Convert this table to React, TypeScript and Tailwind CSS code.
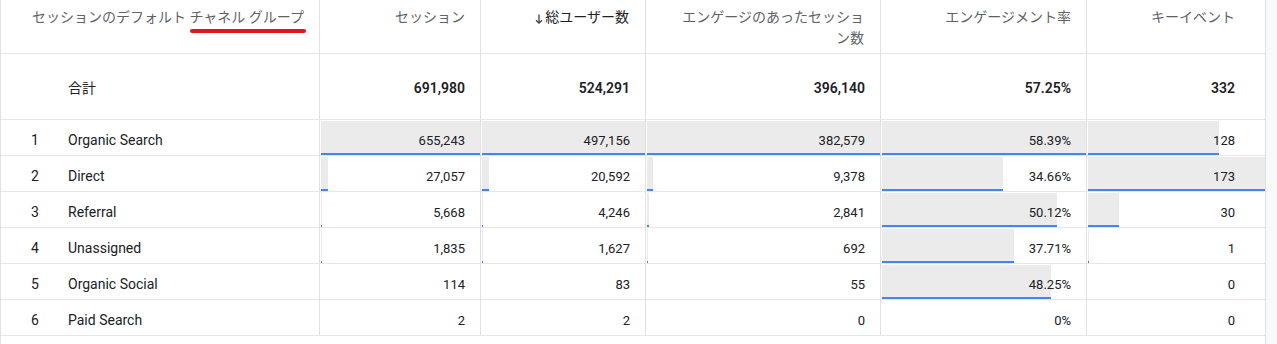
import React from 'react';

type Row = {
  n: number;
  name: string;
  vals: number[];
  labels: string[];
};

const rows: Row[] = [
  { n: 1, name: 'Organic Search', vals: [655243, 497156, 382579, 58.39, 128], labels: ['655,243', '497,156', '382,579', '58.39%', '128'] },
  { n: 2, name: 'Direct', vals: [27057, 20592, 9378, 34.66, 173], labels: ['27,057', '20,592', '9,378', '34.66%', '173'] },
  { n: 3, name: 'Referral', vals: [5668, 4246, 2841, 50.12, 30], labels: ['5,668', '4,246', '2,841', '50.12%', '30'] },
  { n: 4, name: 'Unassigned', vals: [1835, 1627, 692, 37.71, 1], labels: ['1,835', '1,627', '692', '37.71%', '1'] },
  { n: 5, name: 'Organic Social', vals: [114, 83, 55, 48.25, 0], labels: ['114', '83', '55', '48.25%', '0'] },
  { n: 6, name: 'Paid Search', vals: [2, 2, 0, 0, 0], labels: ['2', '2', '0', '0%', '0'] },
];

const totals = ['691,980', '524,291', '396,140', '57.25%', '332'];

const maxes = [0, 1, 2, 3, 4].map((i) => Math.max(...rows.map((r) => r.vals[i])));

const gridCols = 'grid grid-cols-[319px_161px_165px_235px_206px_178px]';

const SortArrow = () => (
  <svg width="10" height="12" viewBox="0 0 10 12" className="mt-[6px] mr-[1px] shrink-0">
    <path d="M5 1.5v8.5M2 7.2L5 10.2 8 7.2" fill="none" stroke="#3c4043" strokeWidth="1.3" />
  </svg>
);

const BarCell = ({ value, max, label, last }: { value: number; max: number; label: string; last?: boolean }) => {
  const pct = max > 0 ? (value / max) * 100 : 0;
  return (
    <div className={`grid pt-[1px] pl-[1px] ${last ? '' : 'border-r border-[#e0e0e0]'}`}>
      <div
        className="[grid-area:1/1] self-stretch justify-self-start bg-[#ebebeb] border-b-2 border-[#4285f4]"
        style={{ width: `${pct}%`, display: pct > 0 ? 'block' : 'none' }}
      />
      <span
        className={`[grid-area:1/1] self-center justify-self-end pt-[6px] text-[13px] text-[#202124] ${last ? 'pr-[30px]' : 'pr-[15px]'}`}
      >
        {label}
      </span>
    </div>
  );
};

export default function App() {
  return (
    <div className="flex h-[344px] w-[1277px] overflow-hidden bg-white font-[Roboto,'Noto_Sans_CJK_JP',sans-serif]">
      <div className="w-[1266px] shrink-0 border-l border-r border-[#e0e0e0]">
        {/* header */}
        <div className={`${gridCols} h-[54px] border-b border-[#e6e6e6] text-[14px] leading-[21px] text-[#5f6368]`}>
          <div className="border-r border-[#e0e0e0] pt-[7px] pr-[15px] text-right">
            セッションのデフォルト{' '}
            <span className="relative inline-block">
              チャネル グループ
              <span className="absolute left-0 right-[-2px] top-[22px] h-[4px] rounded-full bg-[#e3141c]" />
            </span>
          </div>
          <div className="border-r border-[#e0e0e0] pt-[7px] pr-[15px] text-right">セッション</div>
          <div className="flex justify-end border-r border-[#e0e0e0] pt-[7px] pr-[16px] text-[#202124]">
            <SortArrow />
            <span>総ユーザー数</span>
          </div>
          <div className="border-r border-[#e0e0e0] pt-[7px] pr-[16px] text-right">
            エンゲージのあったセッショ
            <br />
            ン数
          </div>
          <div className="border-r border-[#e0e0e0] pt-[7px] pr-[15px] text-right">エンゲージメント率</div>
          <div className="pt-[7px] pr-[30px] text-right">キーイベント</div>
        </div>

        {/* totals */}
        <div className={`${gridCols} h-[66px] border-b border-[#e6e6e6] text-[#202124]`}>
          <div className="flex items-center border-r border-[#e0e0e0] pt-[4px] pl-[67px] text-[14px]">合計</div>
          {totals.map((t, i) => (
            <div
              key={t}
              className={`flex items-center justify-end pt-[4px] text-[14px] font-semibold ${
                i === 4 ? 'pr-[30px]' : 'border-r border-[#e0e0e0] pr-[15px]'
              }`}
            >
              {t}
            </div>
          ))}
        </div>

        {/* data rows */}
        {rows.map((r) => (
          <div key={r.n} className={`${gridCols} h-[36px] border-b border-[#e6e6e6]`}>
            <div className="flex items-center border-r border-[#e0e0e0] pt-[6px] text-[14px] text-[#202124]">
              <span className="w-[67px] pl-[30px]">{r.n}</span>
              <span>{r.name}</span>
            </div>
            {r.vals.map((v, i) => (
              <BarCell key={i} value={v} max={maxes[i]} label={r.labels[i]} last={i === 4} />
            ))}
          </div>
        ))}
      </div>
      <div className="flex-1 bg-[#f8f9fa]" />
    </div>
  );
}
